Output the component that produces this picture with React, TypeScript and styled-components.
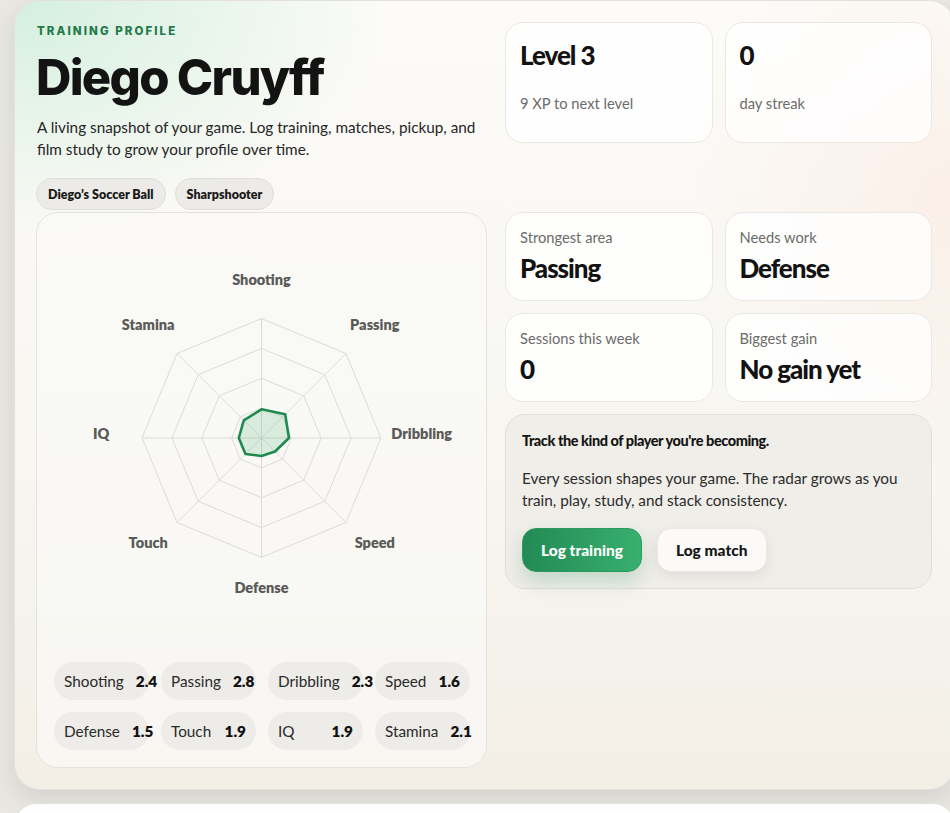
import React from 'react';
import styled, { createGlobalStyle } from 'styled-components';

const GlobalStyle = createGlobalStyle`
  html, body {
    margin: 0;
    padding: 0;
    background: #e9e7e2;
    overflow: hidden;
  }
  body {
    font-family: Lato, "Noto Sans", sans-serif;
    color: #141414;
  }
  * {
    box-sizing: border-box;
  }
`;

const Page = styled.div`
  padding: 0 0 0 14px;
  width: 960px;
  display: flex;
  flex-direction: column;
  gap: 13px;
`;

const HeroCard = styled.section`
  width: 941px;
  border-radius: 26px;
  border: 1px solid #e4e1dc;
  padding: 21px 22px 21px 21px;
  background:
    radial-gradient(ellipse 520px 320px at 0% 0%, rgba(208, 238, 220, 0.9), rgba(208, 238, 220, 0) 72%),
    radial-gradient(ellipse 380px 420px at 100% 25%, rgba(250, 230, 220, 0.5), rgba(250, 230, 220, 0) 70%),
    linear-gradient(180deg, #fcfbf8 0%, #f8f6f1 60%, #f3efe7 100%);
  box-shadow: 0 10px 24px rgba(40, 35, 25, 0.1);
  display: grid;
  grid-template-columns: 451px 427px;
  column-gap: 18px;
`;

const Intro = styled.div`
  padding: 1px 0 0 1px;
`;

const Eyebrow = styled.div`
  font-family: Inter, "Noto Sans", sans-serif;
  font-size: 11.5px;
  font-weight: 800;
  letter-spacing: 0.18em;
  color: #1f7a4a;
  line-height: 16px;
`;

const Name = styled.h1`
  margin: 10px 0 0 -1px;
  font-family: Inter, "Noto Sans", sans-serif;
  font-size: 49px;
  font-weight: 800;
  letter-spacing: -0.035em;
  line-height: 58px;
  color: #131313;
`;

const Blurb = styled.p`
  margin: 9px 0 0;
  font-size: 15.3px;
  line-height: 22px;
  color: #262626;
  max-width: 445px;
`;

const ChipRow = styled.div`
  display: flex;
  gap: 9px;
  margin: 18px 0 2px -1px;
`;

const Chip = styled.span`
  display: inline-flex;
  align-items: center;
  height: 32px;
  padding: 0 11px;
  border-radius: 16px;
  background: #ecebe7;
  border: 1px solid #e0ded9;
  font-size: 12.5px;
  font-weight: 800;
  color: #1a1a1a;
`;

const TopStats = styled.div`
  display: grid;
  grid-template-columns: 1fr 1fr;
  gap: 12px;
  align-self: start;
`;

const StatCard = styled.div<{ $tall?: boolean }>`
  background: rgba(255, 255, 255, 0.82);
  border: 1px solid #ebe8e3;
  border-radius: 18px;
  padding: ${(p) => (p.$tall ? '16px 14px 27px' : '14px 14px 16px')};
  display: flex;
  flex-direction: column;
  gap: ${(p) => (p.$tall ? '22px' : '4px')};
  min-height: ${(p) => (p.$tall ? '121px' : '89px')};
`;

const BigValue = styled.div`
  font-size: 26px;
  font-weight: 900;
  letter-spacing: -0.04em;
  line-height: 32px;
  color: #121212;
`;

const StatLabel = styled.div`
  font-size: 14.7px;
  line-height: 21px;
  color: #6c6c6a;
`;

const RadarCard = styled.div`
  border: 1px solid #e6e3de;
  border-radius: 22px;
  background: rgba(250, 249, 246, 0.7);
  padding: 18px 17px 17px 17px;
  display: flex;
  flex-direction: column;
  gap: 13px;
`;

const RadarSvg = styled.svg`
  display: block;
  width: 100%;
  height: 418px;
`;

const AxisLabel = styled.text`
  font-family: Lato, "Noto Sans", sans-serif;
  font-size: 14.6px;
  font-weight: 800;
  fill: #5a5a58;
`;

const PillGrid = styled.div`
  display: grid;
  grid-template-columns: repeat(4, 95px);
  column-gap: 12px;
  row-gap: 12px;
`;

const Pill = styled.div`
  height: 38px;
  border-radius: 19px;
  background: #eeece8;
  display: flex;
  align-items: center;
  justify-content: space-between;
  gap: 12px;
  padding: 0 10px;
  font-size: 15.3px;
  color: #2a2a2a;
  white-space: nowrap;
`;

const PillValue = styled.b`
  font-weight: 800;
  color: #121212;
`;

const SideColumn = styled.div`
  display: flex;
  flex-direction: column;
  gap: 12px;
`;

const SideGrid = styled.div`
  display: grid;
  grid-template-columns: 1fr 1fr;
  gap: 12px;
`;

const Prompt = styled.div`
  background: #f0eee9;
  border: 1px solid #e2dfd9;
  border-radius: 20px;
  padding: 16px 17px 16px 16px;
`;

const PromptTitle = styled.div`
  font-size: 14.5px;
  font-weight: 900;
  letter-spacing: -0.03em;
  line-height: 20px;
  color: #151515;
`;

const PromptText = styled.p`
  margin: 17px 0 0;
  font-size: 15.3px;
  line-height: 21.5px;
  color: #2b2b2b;
`;

const ButtonRow = styled.div`
  display: flex;
  gap: 15px;
  margin-top: 17px;
`;

const ActionButton = styled.button<{ $primary?: boolean }>`
  height: 44px;
  padding: 0 18px;
  border-radius: 14px;
  border: 1px solid ${(p) => (p.$primary ? '#2a9a5e' : '#ebe8e3')};
  font-family: Lato, "Noto Sans", sans-serif;
  font-size: 15.5px;
  font-weight: 900;
  cursor: pointer;
  color: ${(p) => (p.$primary ? '#ffffff' : '#151515')};
  background: ${(p) =>
    p.$primary ? 'linear-gradient(90deg, #238a55 0%, #38b06e 100%)' : '#fbfaf8'};
  box-shadow: ${(p) =>
    p.$primary ? '0 10px 20px rgba(35, 138, 85, 0.22)' : '0 4px 12px rgba(40, 35, 25, 0.08)'};
`;

const NextCard = styled.section`
  width: 941px;
  height: 120px;
  border-radius: 22px;
  background: #fefefe;
  border: 1px solid #e4e1dc;
`;

const axes = [
  { name: 'Shooting', value: 2.4 },
  { name: 'Passing', value: 2.8 },
  { name: 'Dribbling', value: 2.3 },
  { name: 'Speed', value: 1.6 },
  { name: 'Defense', value: 1.5 },
  { name: 'Touch', value: 1.9 },
  { name: 'IQ', value: 1.9 },
  { name: 'Stamina', value: 2.1 },
];

const CX = 208.5;
const CY = 207;
const R = 120;
const MAX = 10;

const point = (i: number, r: number) => {
  const a = (Math.PI * 2 * i) / axes.length;
  return [CX + r * Math.sin(a), CY - r * Math.cos(a)];
};

const ring = (r: number) =>
  axes.map((_, i) => point(i, r).map((n) => n.toFixed(1)).join(',')).join(' ');

const Radar: React.FC = () => {
  const shape = axes
    .map((a, i) => point(i, (a.value / MAX) * R).map((n) => n.toFixed(1)).join(','))
    .join(' ');

  return (
    <RadarSvg viewBox="0 0 417 418">
      {[30, 60, 90, 120].map((r) => (
        <polygon key={r} points={ring(r)} fill="none" stroke="#dddbd6" strokeWidth={1} />
      ))}
      {axes.map((a, i) => {
        const [x, y] = point(i, R);
        return <line key={a.name} x1={CX} y1={CY} x2={x} y2={y} stroke="#dddbd6" strokeWidth={1} />;
      })}
      <polygon
        points={shape}
        fill="rgba(46, 170, 100, 0.16)"
        stroke="#1f8a4f"
        strokeWidth={2.6}
        strokeLinejoin="round"
      />
      {axes.map((a, i) => {
        const ang = (Math.PI * 2 * i) / axes.length;
        const x = CX + 161 * Math.sin(ang);
        const y = CY - 155 * Math.cos(ang) - 4.5;
        return (
          <AxisLabel key={a.name} x={x} y={y} textAnchor="middle" dominantBaseline="central">
            {a.name}
          </AxisLabel>
        );
      })}
    </RadarSvg>
  );
};

const App: React.FC = () => {
  return (
    <>
      <GlobalStyle />
      <Page>
        <HeroCard>
          <Intro>
            <Eyebrow>TRAINING PROFILE</Eyebrow>
            <Name>Diego Cruyff</Name>
            <Blurb>
              A living snapshot of your game. Log training, matches, pickup, and film study to grow
              your profile over time.
            </Blurb>
            <ChipRow>
              <Chip>Diego’s Soccer Ball</Chip>
              <Chip>Sharpshooter</Chip>
            </ChipRow>
          </Intro>

          <TopStats>
            <StatCard $tall>
              <BigValue>Level 3</BigValue>
              <StatLabel>9 XP to next level</StatLabel>
            </StatCard>
            <StatCard $tall>
              <BigValue>0</BigValue>
              <StatLabel>day streak</StatLabel>
            </StatCard>
          </TopStats>

          <RadarCard>
            <Radar />
            <PillGrid>
              {axes.map((a) => (
                <Pill key={a.name}>
                  <span>{a.name}</span>
                  <PillValue>{a.value.toFixed(1)}</PillValue>
                </Pill>
              ))}
            </PillGrid>
          </RadarCard>

          <SideColumn>
            <SideGrid>
              <StatCard>
                <StatLabel>Strongest area</StatLabel>
                <BigValue>Passing</BigValue>
              </StatCard>
              <StatCard>
                <StatLabel>Needs work</StatLabel>
                <BigValue>Defense</BigValue>
              </StatCard>
              <StatCard>
                <StatLabel>Sessions this week</StatLabel>
                <BigValue>0</BigValue>
              </StatCard>
              <StatCard>
                <StatLabel>Biggest gain</StatLabel>
                <BigValue>No gain yet</BigValue>
              </StatCard>
            </SideGrid>
            <Prompt>
              <PromptTitle>Track the kind of player you're becoming.</PromptTitle>
              <PromptText>
                Every session shapes your game. The radar grows as you train, play, study, and stack
                consistency.
              </PromptText>
              <ButtonRow>
                <ActionButton $primary>Log training</ActionButton>
                <ActionButton>Log match</ActionButton>
              </ButtonRow>
            </Prompt>
          </SideColumn>
        </HeroCard>
        <NextCard />
      </Page>
    </>
  );
};

export default App;
